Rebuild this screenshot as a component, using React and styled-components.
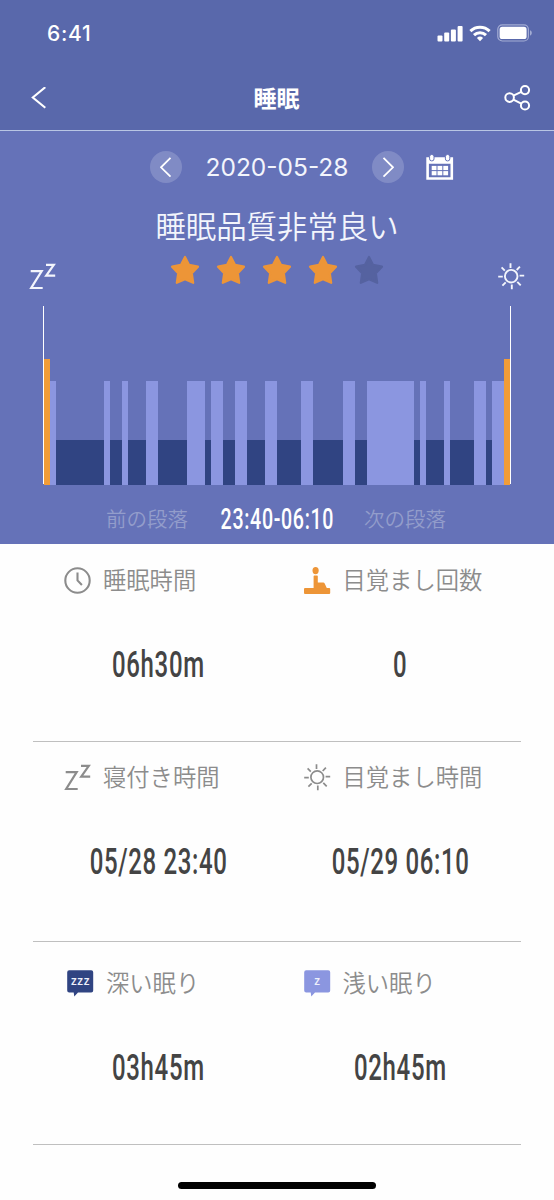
import React from 'react'
import styled, { createGlobalStyle } from 'styled-components';

const GlobalStyle = createGlobalStyle`
    * {
        box-sizing: border-box;
    }
    body {
        margin: 0;
        background-color: #fefefe;
        font-family: "Inter", "Noto Sans CJK JP", sans-serif;
    }
`
const Container = styled.div`
    width: 554px;
    height: 1200px;
    display: flex;
    flex-direction: column;
    overflow: hidden;
`
const Header = styled.header`
    height: 131px;
    background-color: #5968ab;
    border-bottom: 1px solid #b9c6e4;
    color: white;
`
const StatusBar = styled.div`
    height: 66px;
    padding: 0 21px 0 47px;
    display: flex;
    justify-content: space-between;
    align-items: center;
`
const Clock = styled.span`
    font-size: 21px;
    font-weight: 500;
    letter-spacing: 0.7px;
`
const StatusIcons = styled.div`
    display: flex;
    align-items: center;
    gap: 6px;
`
const Nav = styled.nav`
    height: 63px;
    padding: 0 22px 0 31px;
    display: grid;
    grid-template-columns: 28px 1fr 28px;
    align-items: center;
`
const Title = styled.h1`
    margin: -2px 0 0;
    padding-right: 10px;
    text-align: center;
    font-family: "Noto Sans CJK JP", sans-serif;
    font-size: 23px;
    line-height: 30px;
    font-weight: 700;
`
const Hero = styled.section`
    height: 413px;
    padding-top: 20px;
    background-color: #6572b8;
    color: white;
    display: flex;
    flex-direction: column;
`
const DateRow = styled.div`
    height: 32px;
    padding-left: 150px;
    display: flex;
    align-items: center;
`
const RoundButton = styled.button`
    width: 32px;
    height: 32px;
    padding: 0;
    border: none;
    border-radius: 50%;
    background-color: #808bc5;
    display: flex;
    align-items: center;
    justify-content: center;
    cursor: pointer;
`
const DateText = styled.span`
    width: 190px;
    text-align: center;
    font-size: 24.5px;
    letter-spacing: 0;
    color: #f3f5fc;
`
const CalendarButton = styled.div`
    display: flex;
    margin-left: 22px;
`
const Quality = styled.h2`
    margin: 22px 0 0;
    height: 40px;
    line-height: 40px;
    text-align: center;
    font-family: "Noto Sans CJK JP", sans-serif;
    font-size: 30.4px;
    font-weight: 350;
    color: #f3f5fc;
`
const RatingRow = styled.div`
    height: 49px;
    padding: 0 29px;
    display: flex;
    justify-content: space-between;
    align-items: flex-start;
`
const Stars = styled.div`
    display: flex;
    gap: 15.8px;
    padding-top: 10px;
`
const Side = styled.div`
    padding-top: 18px;
    display: flex;
`
const Chart = styled.div`
    height: 179px;
    margin: 12px 43px 0;
    display: flex;
    align-items: flex-end;
`
const Edge = styled.div`
    width: 1.2px;
    height: 177.5px;
    align-self: flex-start;
    background-color: white;
`
const barHeights = { awake: 126, light: 104, deep: 45 }
const barColors = { awake: '#f19c38', light: '#8b96e0', deep: '#304482' }

const Bar = styled.div`
    flex: ${(props) => props.$units} 1 0;
    height: ${(props) => barHeights[props.$kind]}px;
    background-color: ${(props) => barColors[props.$kind]};
`
const Periods = styled.div`
    height: 59px;
    padding: 8px 108px 0 106px;
    display: flex;
    justify-content: space-between;
    align-items: center;
`
const Period = styled.span`
    margin-top: -2px;
    font-family: "Noto Sans CJK JP", sans-serif;
    font-size: 20.5px;
    line-height: 30px;
    font-weight: 350;
    color: #939dcb;
`
const Narrow = styled.span`
    display: block;
    font-family: "Roboto", sans-serif;
    letter-spacing: 1px;
    white-space: nowrap;
    transform: scaleX(${(props) => props.$scale});
`
const Range = styled.div`
    width: 120px;
    padding-left: 2px;
    display: flex;
    justify-content: center;
    font-size: 29.5px;
    line-height: 36px;
    font-weight: 500;
`
const Stats = styled.main`
    padding: 0 33px;
    flex: 1;
`
const StatRow = styled.div`
    height: ${(props) => props.$height}px;
    padding: ${(props) => props.$top}px 0 0 5px;
    border-bottom: 1px solid #bfbfbf;
    display: grid;
    grid-template-columns: 241.5px 241.5px;
    align-items: start;
`
const Label = styled.div`
    height: 34px;
    padding-left: ${(props) => props.$indent}px;
    display: flex;
    align-items: center;
    gap: 12px;
    font-family: "Noto Sans CJK JP", sans-serif;
    font-size: 23.3px;
    font-weight: 350;
    color: #8c8c8c;
    white-space: nowrap;
`
const LabelText = styled.span`
    margin-top: -3px;
    line-height: 34px;
`
const Value = styled.div`
    margin-top: ${(props) => props.$gap}px;
    display: flex;
    justify-content: center;
    font-size: 37.5px;
    line-height: 44px;
    font-weight: 500;
    color: #444;
`
const HomeBar = styled.div`
    width: 198px;
    height: 7px;
    margin: 0 auto 11px;
    border-radius: 4px;
    background-color: black;
`

const Signal = () => (
    <svg width="26" height="17" viewBox="0 0 26 17" fill="white">
        <rect x="0.5" y="10.5" width="5" height="6" rx="1" />
        <rect x="7.2" y="7.5" width="5" height="9" rx="1" />
        <rect x="13.9" y="4.5" width="5" height="12" rx="1" />
        <rect x="20.6" y="1" width="5" height="15.5" rx="1" />
    </svg>
)

const Wifi = () => (
    <svg width="22" height="17" viewBox="0 0 22 17" fill="none" stroke="white" strokeWidth="3">
        <path d="M1.4 6.2a13.8 13.8 0 0 1 19.2 0" />
        <path d="M5 10.1a8.6 8.6 0 0 1 12 0" />
        <path d="M11 16.3L7.9 13a4.5 4.5 0 0 1 6.2 0z" fill="white" stroke="none" />
    </svg>
)

const Battery = () => (
    <svg width="36" height="18" viewBox="0 0 36 18">
        <rect x="0.8" y="0.8" width="30.6" height="16.2" rx="4.5" fill="none" stroke="#a3acd3" strokeWidth="1.2" />
        <rect x="2.6" y="2.8" width="27" height="12.2" rx="2.6" fill="white" />
        <path d="M33 6.2c2.4.8 2.4 4.6 0 5.4z" fill="#a3acd3" />
    </svg>
)

const BackArrow = () => (
    <svg width="15" height="22" viewBox="0 0 15 22" fill="none" stroke="white" strokeWidth="2.1">
        <path d="M14.3 0.2L1.8 10.5l12.5 10.3" />
    </svg>
)

const Share = () => (
    <svg width="27" height="26" viewBox="0 0 27 26" fill="none" stroke="white" strokeWidth="2">
        <circle cx="5.6" cy="12.6" r="4.3" />
        <circle cx="21" cy="5.1" r="4.1" />
        <circle cx="21" cy="20.5" r="4.1" />
        <path d="M9.4 10.6l7.9-3.7M9.4 14.6l7.9 4" />
    </svg>
)

const Chevron = ({ right }) => (
    <svg width="12" height="20" viewBox="0 0 12 20" fill="none" stroke="white" strokeWidth="1.8">
        <path d={right ? 'M1.5 0.8L11 10.3L1.5 19.6' : 'M10.5 0.8L1 10.3L10.5 19.6'} />
    </svg>
)

const Calendar = () => (
    <svg width="28" height="27" viewBox="0 0 28 27">
        <path d="M0.3 3.3h26.8v22.5H0.3zM2.9 9.7v13.5h21.6V9.7z" fill="white" fillRule="evenodd" />
        <rect x="3.6" y="0.5" width="4.4" height="6.4" rx="2" fill="white" stroke="#6572b8" strokeWidth="1" />
        <rect x="19.4" y="0.5" width="4.4" height="6.4" rx="2" fill="white" stroke="#6572b8" strokeWidth="1" />
        {[5.7, 11.5, 17.3].map((x) => (
            <g key={x} fill="white">
                <rect x={x} y="11.9" width="4.8" height="4.2" />
                <rect x={x} y="17.1" width="4.8" height="4.2" />
            </g>
        ))}
    </svg>
)

const Star = ({ on }) => (
    <svg width="30" height="30" viewBox="0 0 30 30">
        <path
            d="M15 2L19.1 9.9L28 11.7L21.8 18.2L23.2 27.8L15 24.2L6.8 27.8L8.2 18.2L2 11.7L10.9 9.9Z"
            fill={on ? '#ed9537' : '#5562a0'}
            stroke={on ? '#ed9537' : '#5562a0'}
            strokeWidth="2.2"
            strokeLinejoin="round"
        />
    </svg>
)

const Zz = ({ color }) => (
    <svg width="27" height="27" viewBox="0 0 27 27" fill="none" stroke={color} strokeWidth="2.2">
        <path d="M1.7 8.1h11L2.2 25h11.5" />
        <path d="M17 1.8h7.8l-7.6 10.8h9" />
    </svg>
)

const Sun = ({ color, width = 1.9 }) => (
    <svg width="27" height="27" viewBox="0 0 27 27" fill="none" stroke={color} strokeWidth={width}>
        <circle cx="13.2" cy="13.2" r="6.3" />
        <path d="M12.5 0.3v4.6M13.8 21.6v4.6M0.2 13.6h4.6M21.6 12.6h4.6M3.6 4.4l3.2 3.2M18.7 7l3.2-3.4M4.4 22.7l3.3-3.3M19.3 18.9l3.4 3.4" />
    </svg>
)

const ClockIcon = () => (
    <svg width="27" height="27" viewBox="0 0 27 27" fill="none" stroke="#8c8c8c" strokeWidth="2.1">
        <circle cx="13.5" cy="13.5" r="12.2" />
        <path d="M13.5 5.6v7.8l4.4 4.6" />
    </svg>
)

const WakeIcon = () => (
    <svg width="27" height="27" viewBox="0 0 27 27" fill="#ed9537">
        <ellipse cx="11.6" cy="3.6" rx="3.1" ry="3.6" />
        <path d="M9.6 9.2q0-.8.8-.8h2.6q.8 0 .8.8v6.3h5.4q1 0 1.5.9l2.2 4.9H9.6z" />
        <rect x="0" y="21.1" width="26.2" height="5.8" rx="1" />
    </svg>
)

const Bubble = ({ color, text }) => (
    <svg width="27" height="27" viewBox="0 0 27 27">
        <path d="M2.2 0.2h22q2 0 2 2v18.2q0 2-2 2H11L7.3 26.6 6.7 22.4H2.2q-2 0-2-2V2.2q0-2 2-2z" fill={color} />
        <text x="13.5" y="14.8" textAnchor="middle" fontFamily="Open Sans, sans-serif" fontSize="12" fontWeight="600" letterSpacing="0.6" fill="#eef0fb">
            {text}
        </text>
    </svg>
)

// One unit is five minutes of the night
const night = [
    ['awake', 1], ['light', 1], ['deep', 8], ['light', 1], ['deep', 2], ['light', 1],
    ['deep', 3], ['light', 2], ['deep', 5], ['light', 3], ['deep', 1], ['light', 2],
    ['deep', 2], ['light', 2], ['deep', 3], ['light', 2], ['deep', 4], ['light', 2],
    ['deep', 5], ['light', 2], ['deep', 2], ['light', 8], ['deep', 1], ['light', 1],
    ['deep', 3], ['light', 1], ['deep', 4], ['light', 2], ['deep', 1], ['light', 2],
    ['awake', 1],
]

const rows = [
    {
        height: 198, top: 19, gap: 45,
        items: [
            { icon: <ClockIcon />, label: '睡眠時間', value: '06h30m', indent: 26 },
            { icon: <WakeIcon />, label: '目覚まし回数', value: '0', indent: 24 },
        ],
    },
    {
        height: 200, top: 18, gap: 45,
        items: [
            { icon: <Zz color="#8c8c8c" />, label: '寝付き時間', value: '05/28 23:40', indent: 26 },
            { icon: <Sun color="#8c8c8c" width={1.7} />, label: '目覚まし時間', value: '05/29 06:10', indent: 24 },
        ],
    },
    {
        height: 203, top: 24, gap: 45,
        items: [
            { icon: <Bubble color="#304482" text="zzz" />, label: '深い眠り', value: '03h45m', indent: 29 },
            { icon: <Bubble color="#8b96e0" text="z" />, label: '浅い眠り', value: '02h45m', indent: 24 },
        ],
    },
]

const App = () => {
    return (
        <Container>
            <GlobalStyle />
            <Header>
                <StatusBar>
                    <Clock>6:41</Clock>
                    <StatusIcons>
                        <Signal />
                        <Wifi />
                        <Battery />
                    </StatusIcons>
                </StatusBar>
                <Nav>
                    <BackArrow />
                    <Title>睡眠</Title>
                    <Share />
                </Nav>
            </Header>

            <Hero>
                <DateRow>
                    <RoundButton><Chevron /></RoundButton>
                    <DateText>2020-05-28</DateText>
                    <RoundButton><Chevron right /></RoundButton>
                    <CalendarButton><Calendar /></CalendarButton>
                </DateRow>
                <Quality>睡眠品質非常良い</Quality>
                <RatingRow>
                    <Side><Zz color="#f3f5fc" /></Side>
                    <Stars>
                        {[1, 2, 3, 4, 5].map((n) => (
                            <Star key={n} on={n <= 4} />
                        ))}
                    </Stars>
                    <Side><Sun color="#f3f5fc" /></Side>
                </RatingRow>
                <Chart>
                    <Edge />
                    {night.map(([kind, units], i) => (
                        <Bar key={i} $kind={kind} $units={units} />
                    ))}
                    <Edge />
                </Chart>
                <Periods>
                    <Period>前の段落</Period>
                    <Range><Narrow $scale={0.665}>23:40-06:10</Narrow></Range>
                    <Period>次の段落</Period>
                </Periods>
            </Hero>

            <Stats>
                {rows.map((row) => (
                    <StatRow key={row.height} $height={row.height} $top={row.top}>
                        {row.items.map((item) => (
                            <div key={item.label}>
                                <Label $indent={item.indent}>
                                    {item.icon}
                                    <LabelText>{item.label}</LabelText>
                                </Label>
                                <Value $gap={row.gap}><Narrow $scale={0.64}>{item.value}</Narrow></Value>
                            </div>
                        ))}
                    </StatRow>
                ))}
            </Stats>
            <HomeBar />
        </Container>
    )
}

export default App
